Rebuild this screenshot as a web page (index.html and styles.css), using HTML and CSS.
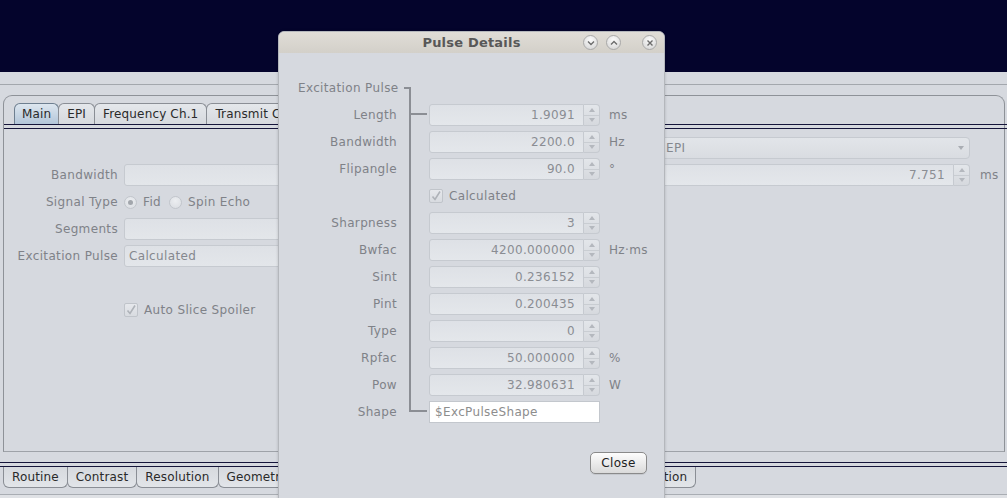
FILE: index.html
```html
<!DOCTYPE html>
<html>
<head>
<meta charset="utf-8">
<title>Pulse Details</title>
<link rel="stylesheet" href="styles.css">
</head>
<body>
<div class="app">
  <div class="topband"></div>
  <div class="rule"></div>

  <div class="tabpane">
    <div class="tabstrip top">
      <div class="tab sel">Main</div>
      <div class="tab">EPI</div>
      <div class="tab">Frequency Ch.1</div>
      <div class="tab">Transmit Ch.1</div>
    </div>
    <div class="dbl"></div>
    <div class="content">
      <div class="lform">
        <div class="row"></div>
        <div class="row"><span class="lbl">Bandwidth</span><div class="tf"></div></div>
        <div class="row"><span class="lbl">Signal Type</span>
          <div class="radios">
            <span class="radio on"></span><span class="rtext">Fid</span>
            <span class="radio"></span><span class="rtext">Spin Echo</span>
          </div>
        </div>
        <div class="row"><span class="lbl">Segments</span><div class="tf"></div></div>
        <div class="row"><span class="lbl">Excitation Pulse</span><div class="tf combo-l">Calculated</div></div>
        <div class="row"></div>
        <div class="row"><span class="lbl"></span>
          <div class="chkrow"><span class="chk"><svg width="12" height="12" viewBox="0 0 12 12"><path d="M2.5 6.5 L5 9.5 L10 1.5" fill="none" stroke="#aeb2b8" stroke-width="1.6"/></svg></span><span class="ctext">Auto Slice Spoiler</span></div>
        </div>
      </div>
      <div class="rform">
        <div class="rrow">
          <div class="combo"><span class="ctxt">EPI</span><span class="carrow"><svg width="8" height="6" viewBox="0 0 8 6"><path d="M1 1 L7 1 L4 5 Z" fill="#a9adb3"/></svg></span></div>
          <span class="unit"></span>
        </div>
        <div class="rrow">
          <div class="spin wide"><div class="txt">7.751</div><div class="arr"><span class="up"></span><span class="dn"></span></div></div>
          <span class="unit">ms</span>
        </div>
      </div>
    </div>
  </div>

  <div class="btabs">
    <div class="dbl full"></div>
    <div class="tabstrip bottom">
      <div class="tab">Routine</div>
      <div class="tab">Contrast</div>
      <div class="tab">Resolution</div>
      <div class="tab">Geometry</div>
      <div class="tab">Setups</div>
      <div class="tab">Physiology</div>
      <div class="tab">Diffusion</div>
      <div class="tab">Sequence</div>
      <div class="tab">Reconstruction</div>
    </div>
  </div>
  <div class="footrule"></div>

  <div class="dialog">
    <div class="titlebar">
      <div class="tb-side"></div>
      <div class="tb-title">Pulse Details</div>
      <div class="tb-btns">
        <span class="wbtn"><svg width="8" height="6" viewBox="0 0 8 6"><path d="M1 1.5 L4 4.5 L7 1.5" fill="none" stroke="#6c6c6c" stroke-width="1.4"/></svg></span>
        <span class="wbtn"><svg width="8" height="6" viewBox="0 0 8 6"><path d="M1 4.5 L4 1.5 L7 4.5" fill="none" stroke="#6c6c6c" stroke-width="1.4"/></svg></span>
        <span class="wbtn close"><svg width="8" height="8" viewBox="0 0 8 8"><path d="M1.5 1.5 L6.5 6.5 M6.5 1.5 L1.5 6.5" fill="none" stroke="#6c6c6c" stroke-width="1.4"/></svg></span>
      </div>
    </div>
    <div class="dbody">
      <svg class="bracket" width="30" height="340" viewBox="0 0 30 340"><path d="M4 8 H11 M10 7 V332 M10 34 H27 M10 331 H27" fill="none" stroke="#8b8e94" stroke-width="2"/></svg>
      <div class="drow"><span class="dlbl head">Excitation Pulse</span></div>
      <div class="drow"><span class="dlbl">Length</span><div class="spin"><div class="txt">1.9091</div><div class="arr"><span class="up"></span><span class="dn"></span></div></div><span class="dunit">ms</span></div>
      <div class="drow"><span class="dlbl">Bandwidth</span><div class="spin"><div class="txt">2200.0</div><div class="arr"><span class="up"></span><span class="dn"></span></div></div><span class="dunit">Hz</span></div>
      <div class="drow"><span class="dlbl">Flipangle</span><div class="spin"><div class="txt">90.0</div><div class="arr"><span class="up"></span><span class="dn"></span></div></div><span class="dunit">°</span></div>
      <div class="drow"><span class="dlbl"></span><div class="chkrow"><span class="chk"><svg width="12" height="12" viewBox="0 0 12 12"><path d="M2.5 6.5 L5 9.5 L10 1.5" fill="none" stroke="#aeb2b8" stroke-width="1.6"/></svg></span><span class="ctext">Calculated</span></div></div>
      <div class="drow"><span class="dlbl">Sharpness</span><div class="spin"><div class="txt">3</div><div class="arr"><span class="up"></span><span class="dn"></span></div></div></div>
      <div class="drow"><span class="dlbl">Bwfac</span><div class="spin"><div class="txt">4200.000000</div><div class="arr"><span class="up"></span><span class="dn"></span></div></div><span class="dunit">Hz·ms</span></div>
      <div class="drow"><span class="dlbl">Sint</span><div class="spin"><div class="txt">0.236152</div><div class="arr"><span class="up"></span><span class="dn"></span></div></div></div>
      <div class="drow"><span class="dlbl">Pint</span><div class="spin"><div class="txt">0.200435</div><div class="arr"><span class="up"></span><span class="dn"></span></div></div></div>
      <div class="drow"><span class="dlbl">Type</span><div class="spin"><div class="txt">0</div><div class="arr"><span class="up"></span><span class="dn"></span></div></div></div>
      <div class="drow"><span class="dlbl">Rpfac</span><div class="spin"><div class="txt">50.000000</div><div class="arr"><span class="up"></span><span class="dn"></span></div></div><span class="dunit">%</span></div>
      <div class="drow"><span class="dlbl">Pow</span><div class="spin"><div class="txt">32.980631</div><div class="arr"><span class="up"></span><span class="dn"></span></div></div><span class="dunit">W</span></div>
      <div class="drow"><span class="dlbl">Shape</span><div class="shape">$ExcPulseShape</div></div>
      <div class="dfoot"><button class="btn">Close</button></div>
    </div>
  </div>
</div>
</body>
</html>
```

FILE: styles.css
```css
* { box-sizing: border-box; }
html, body { margin: 0; padding: 0; }
body {
  width: 1007px;
  height: 498px;
  overflow: hidden;
  background: #d6d9df;
  font-family: "DejaVu Sans", sans-serif;
  font-size: 12px;
  letter-spacing: 0.35px;
  color: #7f8288;
}
.app { position: relative; width: 1007px; height: 498px; overflow: hidden; }
.topband { height: 72px; background: #04042c; }
.rule { margin-top: 12px; border-top: 1px solid #a3a7ad; }

.tabpane {
  margin: 10px 2px 0 3px;
  border: 1px solid #8e9298;
  border-bottom-color: #9ea2a8;
  border-radius: 9px 9px 0 0;
  padding-top: 7px;
}
.tabstrip { display: flex; height: 21px; }
.tabstrip.top { padding-left: 10px; }
.tab {
  height: 21px;
  padding: 0 8px;
  line-height: 20px;
  letter-spacing: 0.15px;
  color: #2a2a2a;
  border: 1px solid #8a8e95;
  border-bottom: none;
  border-radius: 6px 6px 0 0;
  background: linear-gradient(#e4e7eb, #d6d9de);
  white-space: nowrap;
  margin-right: -1px;
}
.tab.sel {
  padding: 0 7px;
  background: linear-gradient(#dde6ef, #b3c6d9);
  border-color: #6e7f90;
}
.dbl {
  height: 5px;
  border-top: 1px solid #15153a;
  border-bottom: 1px solid #15153a;
  margin-right: -4px;
}
.content {
  height: 322px;
  display: flex;
  padding-top: 8px;
}
.lform {
  display: flex;
  flex-direction: column;
  gap: 5px;
}
.row { height: 22px; display: flex; align-items: center; }
.lbl { width: 114px; text-align: right; margin-right: 6px; white-space: nowrap; }
.tf {
  width: 260px;
  height: 22px;
  border: 1px solid #c6cad0;
  border-radius: 3px;
  background: linear-gradient(#dee1e6, #e3e6ea);
}
.combo-l { padding-left: 4px; line-height: 20px; color: #85888e; }
.radios { display: flex; align-items: center; }
.radio {
  width: 13px; height: 13px;
  border-radius: 50%;
  border: 1px solid #c2c6cc;
  background: radial-gradient(circle at 50% 35%, #eceef1, #d9dce1);
  display: inline-flex; align-items: center; justify-content: center;
}
.radio.on::after {
  content: "";
  width: 5px; height: 5px; border-radius: 50%;
  background: #a2a6ac;
}
.rtext { margin: 0 8px 0 6px; }
.chkrow { display: flex; align-items: center; }
.chk {
  width: 14px; height: 14px;
  border: 1px solid #c0c4ca;
  border-radius: 2px;
  background: linear-gradient(#e6e8ec, #d8dbe0);
  display: inline-flex; align-items: center; justify-content: center;
}
.ctext { margin-left: 6px; }

.rform {
  margin-left: auto;
  display: flex;
  flex-direction: column;
  gap: 5px;
}
.rrow { display: flex; align-items: center; height: 22px; }
.unit { width: 24px; margin-left: 10px; color: #7f8288; }
.combo {
  width: 310px; height: 22px;
  border: 1px solid #c6cad0;
  border-radius: 4px;
  background: linear-gradient(#e2e5e9, #d9dce1);
  display: flex; align-items: center;
}
.ctxt { flex: 1; padding-left: 5px; color: #85888e; }
.carrow { width: 16px; display: flex; justify-content: center; }

.spin { display: flex; width: 171px; height: 22px; }
.spin.wide { width: 310px; }
.spin .txt {
  flex: 1;
  border: 1px solid #c6cad0;
  border-radius: 3px 0 0 3px;
  background: linear-gradient(#dee1e6, #e4e7eb);
  text-align: right;
  padding-right: 8px;
  line-height: 20px;
  color: #8a8d93;
}
.spin .arr {
  width: 16px;
  border: 1px solid #c6cad0;
  border-left: none;
  border-radius: 0 4px 4px 0;
  background: linear-gradient(#e3e6ea, #d6d9de);
  display: flex; flex-direction: column;
}
.arr span { flex: 1; display: flex; align-items: center; justify-content: center; }
.arr .up { border-bottom: 1px solid #c9cdd2; }
.arr .up::after {
  content: ""; border-left: 3px solid transparent; border-right: 3px solid transparent;
  border-bottom: 4px solid #b4b8be;
}
.arr .dn::after {
  content: ""; border-left: 3px solid transparent; border-right: 3px solid transparent;
  border-top: 4px solid #b4b8be;
}

.btabs { margin-top: 10px; }
.dbl.full { margin-right: 0; }
.tabstrip.bottom { padding-left: 3px; }
.tabstrip.bottom .tab {
  border: 1px solid #8a8e95;
  border-top: none;
  border-radius: 0 0 6px 6px;
  background: linear-gradient(#d6d9de, #e2e5e9);
}
.footrule { margin-top: 6px; border-top: 1px solid #a9adb3; height: 4px; background: #dfe1e5; }

/* dialog */
.dialog {
  position: absolute;
  left: 278px;
  top: 31px;
  width: 387px;
  height: 480px;
  border: 1px solid #b4b7bc;
  border-radius: 6px 6px 0 0;
  background: #d6d9df;
  box-shadow: 0 0 3px rgba(0,0,0,0.18);
}
.titlebar {
  height: 21px;
  display: grid;
  grid-template-columns: 1fr auto 1fr;
  align-items: center;
  background: linear-gradient(#e0ddd7, #d3d0c9);
  border-radius: 5px 5px 0 0;
}
.tb-title { font-weight: bold; font-size: 13px; letter-spacing: 0.2px; color: #585858; }
.tb-btns { display: flex; justify-content: flex-end; align-items: center; padding-right: 7px; }
.wbtn {
  width: 15px; height: 15px; border-radius: 50%;
  border: 1px solid #a9a9a9;
  background: radial-gradient(circle at 50% 30%, #fbfbfb, #d3d3d3);
  display: inline-flex; align-items: center; justify-content: center;
  margin-left: 8px;
}
.wbtn.close { margin-left: 21px; }

.dbody {
  position: relative;
  padding: 24px 0 0 19px;
  display: flex;
  flex-direction: column;
  gap: 5px;
}
.bracket { position: absolute; left: 121px; top: 27px; }
.drow { display: flex; align-items: center; height: 22px; }
.dlbl { width: 99px; text-align: right; margin-right: 32px; white-space: nowrap; }
.dlbl.head { text-align: left; }
.dunit { margin-left: 9px; }
.shape {
  width: 171px; height: 22px;
  border: 1px solid #c3c7cd;
  background: #ffffff;
  padding-left: 5px;
  line-height: 20px;
  color: #8d8d8d;
}
.dfoot { display: flex; justify-content: flex-end; padding-right: 17px; margin-top: 24px; }
.btn {
  width: 57px; height: 22px;
  border: 1px solid #8a8a8a;
  border-radius: 5px;
  background: linear-gradient(#fdfdfd, #dadada);
  font-family: "DejaVu Sans", sans-serif;
  font-size: 12px;
  letter-spacing: 0.35px;
  color: #222;
  padding: 0;
  box-shadow: 0 1px 0 rgba(0,0,0,0.08);
}
```
